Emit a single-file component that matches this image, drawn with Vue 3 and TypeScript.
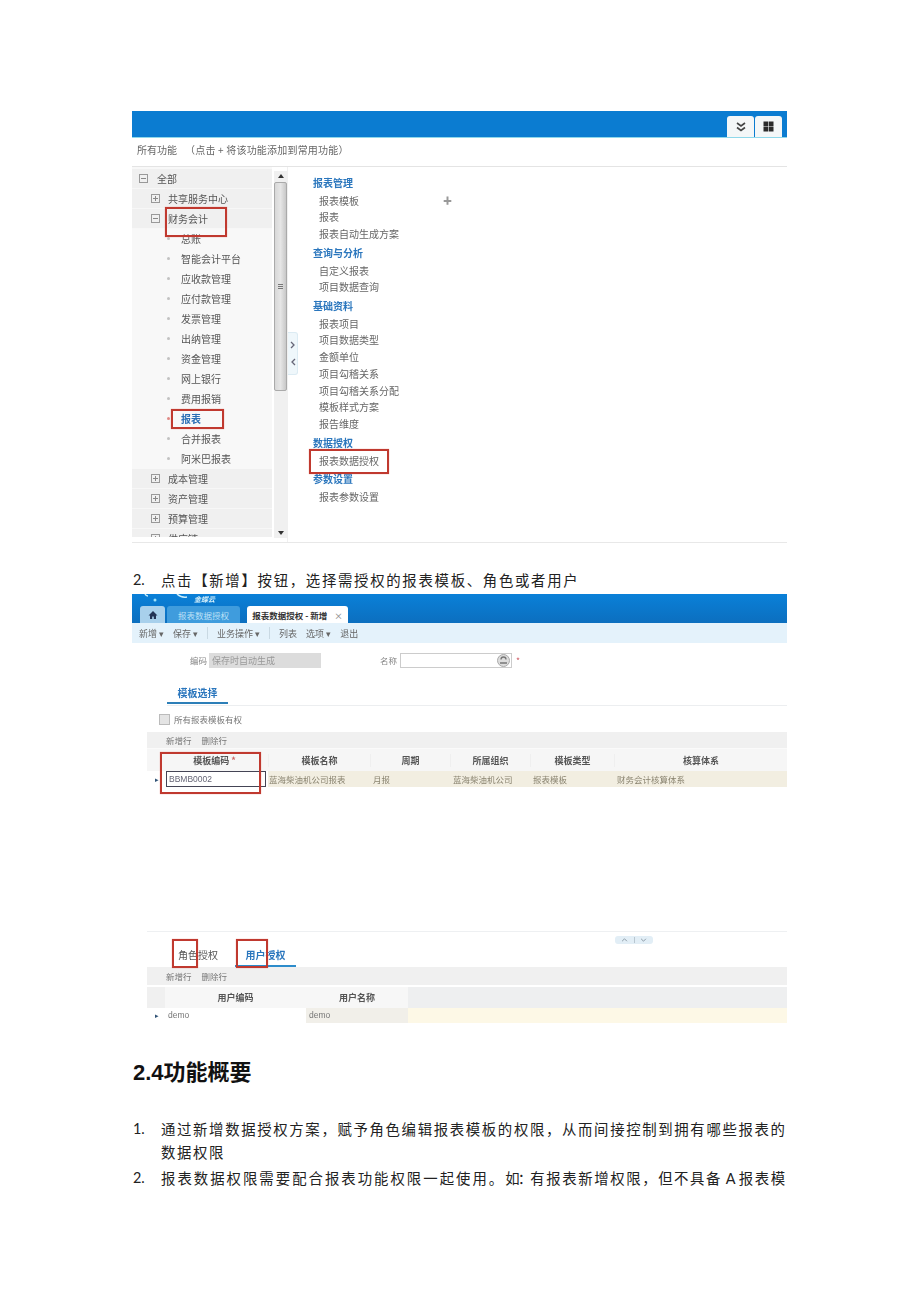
<script setup lang="ts">
type TreeRow = { label: string; kind: 'open' | 'closed' | 'leaf'; depth: number; active?: boolean }
type ReportRow = { label: string; head?: boolean }

const treeRows: TreeRow[] = [
  { label: '全部', kind: 'open', depth: 0 },
  { label: '共享服务中心', kind: 'closed', depth: 1 },
  { label: '财务会计', kind: 'open', depth: 1 },
  { label: '总账', kind: 'leaf', depth: 2 },
  { label: '智能会计平台', kind: 'leaf', depth: 2 },
  { label: '应收款管理', kind: 'leaf', depth: 2 },
  { label: '应付款管理', kind: 'leaf', depth: 2 },
  { label: '发票管理', kind: 'leaf', depth: 2 },
  { label: '出纳管理', kind: 'leaf', depth: 2 },
  { label: '资金管理', kind: 'leaf', depth: 2 },
  { label: '网上银行', kind: 'leaf', depth: 2 },
  { label: '费用报销', kind: 'leaf', depth: 2 },
  { label: '报表', kind: 'leaf', depth: 2, active: true },
  { label: '合并报表', kind: 'leaf', depth: 2 },
  { label: '阿米巴报表', kind: 'leaf', depth: 2 },
  { label: '成本管理', kind: 'closed', depth: 1 },
  { label: '资产管理', kind: 'closed', depth: 1 },
  { label: '预算管理', kind: 'closed', depth: 1 },
  { label: '供应链', kind: 'closed', depth: 1 },
]

const reportRows: ReportRow[] = [
  { label: '报表管理', head: true },
  { label: '报表模板' },
  { label: '报表' },
  { label: '报表自动生成方案' },
  { label: '查询与分析', head: true },
  { label: '自定义报表' },
  { label: '项目数据查询' },
  { label: '基础资料', head: true },
  { label: '报表项目' },
  { label: '项目数据类型' },
  { label: '金额单位' },
  { label: '项目勾稽关系' },
  { label: '项目勾稽关系分配' },
  { label: '模板样式方案' },
  { label: '报告维度' },
  { label: '数据授权', head: true },
  { label: '报表数据授权' },
  { label: '参数设置', head: true },
  { label: '报表参数设置' },
]

const templateHeads = ['模板名称', '周期', '所属组织', '模板类型', '核算体系']
const templateCells = ['蓝海柴油机公司报表', '月报', '蓝海柴油机公司', '报表模板', '财务会计核算体系']
</script>

<template>
  <main class="page">
    <section class="shot shot-one">
      <div class="top-bar">
        <div class="top-btns">
          <span class="top-btn">
            <svg width="12" height="12" viewBox="0 0 12 12"><path d="M2 2l4 3 4-3M2 6.500l4 3 4-3" fill="none" stroke="#444" stroke-width="1.600" /></svg>
          </span>
          <span class="top-btn">
            <svg width="11" height="11" viewBox="0 0 11 11"><path d="M.500 .500h4.700v4.700H.500zM5.800 .500h4.700v4.700H5.800zM.500 5.800h4.700v4.700H.500zM5.800 5.800h4.700v4.700H5.800z" fill="#2b2b2b" /></svg>
          </span>
        </div>
      </div>
      <div class="hint">所有功能<span class="hint-note">（点击 + 将该功能添加到常用功能）</span></div>
      <div class="func-body">
        <div class="tree">
          <div
            v-for="row in treeRows"
            :key="row.label"
            class="tree-row"
            :class="[`depth-${row.depth}`, { 'tree-leaf': row.kind === 'leaf', 'tree-active': row.active }]"
          >
            <svg v-if="row.kind !== 'leaf'" class="tree-box" width="9" height="9" viewBox="0 0 9 9">
              <rect x="0.500" y="0.500" width="8" height="8" fill="none" stroke="#999" />
              <path :d="row.kind === 'open' ? 'M2 4.500h5' : 'M2 4.500h5M4.500 2v5'" stroke="#888" />
            </svg>
            <i v-else class="tree-dot"></i>
            <span>{{ row.label }}</span>
          </div>
        </div>
        <div class="scrollbar">
          <span class="arrow-up"></span>
          <div class="thumb"><i></i></div>
          <span class="arrow-down"></span>
        </div>
        <div class="reports">
          <div class="collapse-handle">
            <svg width="6" height="8" viewBox="0 0 6 8"><path d="M1 1l3 3-3 3" fill="none" stroke="#667" stroke-width="1.300" /></svg>
            <svg width="6" height="8" viewBox="0 0 6 8"><path d="M5 1L2 4l3 3" fill="none" stroke="#667" stroke-width="1.300" /></svg>
          </div>
          <div
            v-for="row in reportRows"
            :key="row.label"
            :class="row.head ? 'report-head' : 'report-item'"
          >
            {{ row.label }}
            <span v-if="row.label === '报表模板'" class="report-plus">✚</span>
          </div>
        </div>
      </div>
      <i class="mark mark-finance"></i>
      <i class="mark mark-report"></i>
      <i class="mark mark-grant"></i>
    </section>

    <p class="step">
      <span class="num">2.</span>
      <span>点击【新增】按钮，选择需授权的报表模板、角色或者用户</span>
    </p>

    <section class="shot shot-two">
      <div class="app-head">
        <svg class="logo" width="60" height="10" viewBox="0 0 60 10">
          <path d="M13 0q1 2 3 2" fill="none" stroke="#cdeefa" stroke-width="1.500" />
          <circle cx="23" cy="6" r="1.500" fill="#9fe3fa" />
          <path d="M45 0q4 4 10 3" fill="none" stroke="#cdeefa" stroke-width="1.500" />
        </svg>
        <span class="brand">金蝶云</span>
        <div class="tabs">
          <span class="tab tab-home">
            <svg width="10" height="10" viewBox="0 0 10 10"><path d="M5 1L.500 5.500H2V9h2.200V6.500h1.600V9H8V5.500h1.500z" fill="#235" /></svg>
          </span>
          <span class="tab tab-old">报表数据授权</span>
          <span class="tab tab-new">报表数据授权 - 新增<em>×</em></span>
        </div>
      </div>
      <div class="toolbar">
        <span>新增 ▾</span>
        <span>保存 ▾</span>
        <i></i>
        <span>业务操作 ▾</span>
        <i></i>
        <span>列表</span>
        <span>选项 ▾</span>
        <span>退出</span>
      </div>
      <div class="form-row">
        <label class="form-label">编码</label>
        <div class="input-code">保存时自动生成</div>
        <label class="form-label name-label">名称</label>
        <div class="input-name">
          <svg width="13" height="13" viewBox="0 0 13 13">
            <circle cx="6.500" cy="6.500" r="6" fill="#ddd" stroke="#aaa" />
            <path d="M4 5.500a2.500 2.500 0 015 0M3 9h7" fill="none" stroke="#777" stroke-width="1.300" />
          </svg>
        </div>
        <span class="required">*</span>
      </div>
      <div class="section-tabs">
        <span class="section-tab">模板选择</span>
      </div>
      <div class="work-area">
        <label class="all-check"><i></i>所有报表模板有权</label>
        <div class="row-tools"><span>新增行</span><span>删除行</span></div>
        <div class="grid-row grid-head">
          <span></span>
          <span>模板编码 <em>*</em></span>
          <span v-for="head in templateHeads" :key="head">{{ head }}</span>
        </div>
        <div class="grid-row grid-body">
          <span class="row-arrow">▸</span>
          <span class="code-cell"><b>BBMB0002</b></span>
          <span v-for="cell in templateCells" :key="cell">{{ cell }}</span>
        </div>
        <div class="blank-area">
          <div class="split-btn">
            <svg width="7" height="4" viewBox="0 0 8 5"><path d="M1 4l3-3 3 3" fill="none" stroke="#8a9aa5" stroke-width="1.200" /></svg>
            <i></i>
            <svg width="7" height="4" viewBox="0 0 8 5"><path d="M1 1l3 3 3-3" fill="none" stroke="#8a9aa5" stroke-width="1.200" /></svg>
          </div>
        </div>
        <div class="auth-tabs">
          <span class="auth-tab">角色授权</span>
          <span class="auth-tab auth-on">用户授权</span>
        </div>
        <div class="row-tools lower-tools"><span>新增行</span><span>删除行</span></div>
        <div class="user-row user-head">
          <span></span><span>用户编码</span><span>用户名称</span><span></span>
        </div>
        <div class="user-row user-body">
          <span class="row-arrow">▸</span><span class="user-code">demo</span><span class="user-name">demo</span><span class="user-fill"></span>
        </div>
      </div>
      <i class="mark mark-code"></i>
      <i class="mark mark-role"></i>
      <i class="mark mark-user"></i>
    </section>

    <h2 class="title"><span>2.4</span>功能概要</h2>

    <ol class="notes">
      <li>
        <span class="num">1.</span>
        <p>通过新增数据授权方案，赋予角色编辑报表模板的权限，从而间接控制到拥有哪些报表的数据权限</p>
      </li>
      <li>
        <span class="num">2.</span>
        <p class="cut"><span class="wide">报表数据权限需要配合报表功能权限一起使用。</span><span class="tight">如：</span><span class="even">有报表新增权限，但不具备</span><span class="latin"> A </span><span class="even">报表模</span></p>
      </li>
    </ol>
  </main>
</template>

<style scoped>
.page {
  width: 920px;
  height: 1302px;
  box-sizing: border-box;
  padding: 111px 133px 0 132px;
  overflow: hidden;
  background: #fff;
  font-family: "Noto Sans CJK SC", "Noto Sans", sans-serif;
  color: #222;
}

.shot {
  position: relative;
  filter: blur(0.4px);
}

.mark {
  position: absolute;
  box-sizing: border-box;
  border: 2px solid #c0392f;
  box-shadow: 0 0 1px rgba(230, 80, 70, 0.6);
}

/* first screenshot */
.shot-one {
  height: 432px;
  border-bottom: 1px solid #e8e8e8;
  box-sizing: border-box;
}

.top-bar {
  height: 26px;
  display: flex;
  justify-content: flex-end;
  align-items: flex-end;
  padding-right: 5px;
  background: #0b7cd1;
  border-bottom: 1px solid #8fd8ea;
}

.top-btns {
  display: flex;
  gap: 1px;
}

.top-btn {
  width: 27px;
  height: 21px;
  display: flex;
  align-items: center;
  justify-content: center;
  background: #f4f7f8;
  border-radius: 3px 3px 0 0;
}

.hint {
  height: 28px;
  padding-left: 5px;
  line-height: 24px;
  font-size: 10px;
  color: #666;
  border-bottom: 1px solid #e4e4e4;
}

.hint-note {
  margin-left: 8px;
  letter-spacing: 0.2px;
}

.func-body {
  height: 375px;
  display: flex;
  overflow: hidden;
}

.tree {
  width: 140px;
  flex: none;
  padding-top: 2px;
  box-sizing: border-box;
  height: 370px;
  overflow: hidden;
  background: #f8f8f8;
}

.tree-row {
  height: 20px;
  display: flex;
  align-items: center;
  font-size: 10px;
  color: #555;
  background: #f0f0f0;
  border-bottom: 1px solid #f7f7f7;
  box-sizing: border-box;
}

.tree-leaf {
  background: #f8f8f8;
  border-bottom: none;
  padding-bottom: 1px;
}

.tree-box {
  flex: none;
  margin-right: 8px;
}

.depth-0 {
  padding-left: 7px;
}

.depth-0 .tree-box {
  margin-right: 9px;
}

.depth-1 {
  padding-left: 19px;
}

.depth-2 {
  padding-left: 35px;
}

.tree-dot {
  width: 3px;
  height: 3px;
  margin-right: 11px;
  border-radius: 50%;
  background: #c2c2c2;
}

.tree-active .tree-dot {
  background: #e08a86;
}

.tree-active span {
  color: #2a6fb5;
  font-weight: 700;
}

.scrollbar {
  width: 13px;
  flex: none;
  margin: 4px 0 4px 2px;
  display: flex;
  flex-direction: column;
  align-items: center;
  background: #f0f0f0;
}

.arrow-up,
.arrow-down {
  width: 0;
  height: 0;
  flex: none;
  margin: 3px 0;
  border-left: 3px solid transparent;
  border-right: 3px solid transparent;
}

.arrow-up {
  border-bottom: 4px solid #333;
}

.arrow-down {
  margin-top: auto;
  border-top: 4px solid #333;
}

.thumb {
  width: 13px;
  height: 209px;
  margin-top: 1px;
  display: flex;
  align-items: center;
  justify-content: center;
  box-sizing: border-box;
  border: 1px solid #aaa;
  border-radius: 2px;
  background: linear-gradient(90deg, #d8d8d8, #e6e6e6 50%, #c8c8c8);
}

.thumb i {
  width: 5px;
  height: 6px;
  background: repeating-linear-gradient(180deg, #777 0 1px, transparent 1px 2px);
}

.reports {
  position: relative;
  flex: 1;
  padding: 6px 0 0 25px;
  border-left: 1px solid #f0f0f0;
  font-size: 10px;
}

.collapse-handle {
  position: absolute;
  top: 165px;
  left: 0;
  width: 10px;
  height: 43px;
  box-sizing: border-box;
  display: flex;
  flex-direction: column;
  align-items: center;
  justify-content: space-evenly;
  background: #eff7fb;
  border: 1px solid #dcebf3;
  border-left: none;
  border-radius: 0 3px 3px 0;
}

.report-head {
  height: 19.650px;
  line-height: 19.650px;
  color: #2a76bd;
  font-weight: 700;
}

.report-item {
  position: relative;
  height: 16.750px;
  line-height: 16.750px;
  padding-left: 6px;
  color: #666;
}

.report-plus {
  position: absolute;
  left: 130px;
  top: 0;
  font-size: 9px;
  color: #999;
}

.mark-finance {
  left: 33px;
  top: 96px;
  width: 62px;
  height: 30px;
}

.mark-report {
  left: 39px;
  top: 298px;
  width: 53px;
  height: 20px;
}

.mark-grant {
  left: 177px;
  top: 338px;
  width: 80px;
  height: 25px;
}

/* step line */
.step {
  height: 22px;
  margin: 26px 0 3px;
  display: flex;
  font-size: 14.400px;
  line-height: 22px;
  letter-spacing: 1.700px;
  color: #222;
}

.num {
  width: 29px;
  flex: none;
  padding-left: 1px;
  box-sizing: border-box;
  font-family: Lato, "Noto Sans", sans-serif;
  letter-spacing: 0;
}

/* second screenshot */
.shot-two {
  height: 428px;
  font-size: 9px;
  color: #666;
}

.app-head {
  position: relative;
  height: 29px;
  display: flex;
  align-items: flex-end;
  background: linear-gradient(180deg, #0a80d8, #0c6fbf);
}

.logo {
  position: absolute;
  left: 0;
  top: 0;
}

.brand {
  position: absolute;
  left: 62px;
  top: 0;
  font-size: 7px;
  line-height: 10px;
  font-style: italic;
  font-weight: 700;
  color: #d6f0fb;
}

.tabs {
  display: flex;
  gap: 2px;
  padding-left: 8px;
}

.tab {
  height: 17px;
  display: flex;
  align-items: center;
  justify-content: center;
  border-radius: 3px 3px 0 0;
  font-size: 8.500px;
}

.tab-home {
  width: 25px;
  background: #a8d0ec;
}

.tab-old {
  width: 73px;
  background: #3f9cdd;
  color: #bde0f6;
}

.tab-new {
  width: 101px;
  margin-left: 5px;
  background: #fff;
  color: #333;
  font-weight: 700;
}

.tab-new em {
  margin-left: 7px;
  font-style: normal;
  font-weight: 400;
  color: #888;
}

.toolbar {
  height: 20px;
  display: flex;
  align-items: center;
  gap: 9px;
  padding-left: 7px;
  background: #e4f2fb;
  color: #666;
}

.toolbar i {
  width: 1px;
  height: 12px;
  background: #c9d9e3;
}

.form-row {
  height: 37px;
  display: flex;
  align-items: center;
  padding-left: 58px;
  padding-bottom: 3px;
  box-sizing: border-box;
  font-size: 8.500px;
}

.form-label {
  width: 19px;
  flex: none;
  color: #888;
}

.input-code {
  width: 112px;
  height: 15px;
  padding-left: 3px;
  box-sizing: border-box;
  line-height: 15px;
  background: #dcdcdc;
  color: #999;
  font-size: 9px;
}

.name-label {
  margin-left: 59px;
  width: 20px;
}

.input-name {
  width: 112px;
  height: 15px;
  display: flex;
  align-items: center;
  justify-content: flex-end;
  padding-right: 1px;
  box-sizing: border-box;
  background: #fff;
  border: 1px solid #ccc;
}

.required {
  margin-left: 4px;
  color: #d0606a;
}

.section-tabs {
  height: 25px;
  margin-left: 35px;
  border-bottom: 1px solid #eceef0;
  position: relative;
}

.section-tab {
  position: absolute;
  left: 0;
  bottom: 1px;
  width: 61px;
  height: 22px;
  box-sizing: border-box;
  text-align: center;
  line-height: 21px;
  font-size: 10px;
  font-weight: 700;
  color: #2a76bd;
  border-bottom: 2px solid #2d7fb8;
}

.work-area {
  margin-left: 15px;
}

.all-check {
  height: 26px;
  display: flex;
  align-items: center;
  padding-left: 12px;
  font-size: 8.500px;
  color: #777;
}

.all-check i {
  width: 9px;
  height: 9px;
  margin-right: 4px;
  background: #e4e4e4;
  border: 1px solid #bbb;
}

.row-tools {
  height: 16px;
  display: flex;
  align-items: center;
  gap: 10px;
  padding-left: 19px;
  background: #f0f0f0;
  font-size: 8.500px;
  color: #777;
}

.grid-row {
  display: grid;
  grid-template-columns: 13px 108px 102px 80px 80px 84px 1fr;
  align-items: center;
}

.grid-head {
  height: 22px;
  text-align: center;
  background: #f6f6f6;
  font-weight: 700;
  color: #555;
  border-top: 1px solid #fafafa;
}

.grid-head em {
  font-style: normal;
  color: #c66;
}

.grid-head span + span {
  border-left: 1px solid #efefef;
}

.grid-body {
  height: 16px;
  background: linear-gradient(90deg, #fff 13px, #f2eee1 13px);
  font-size: 8.500px;
  color: #8a8470;
}

.grid-body span + span + span {
  padding-left: 3px;
}

.grid-body span:nth-child(3) {
  padding-left: 1px;
}

.row-arrow {
  padding-left: 8px;
  font-size: 7px;
  color: #357;
}

.code-cell {
  height: 16px;
  background: #fff;
}

.code-cell b {
  display: block;
  width: 100px;
  height: 16px;
  margin-left: 6px;
  padding-left: 2px;
  box-sizing: border-box;
  border: 1px solid #445;
  font: 400 8.500px/14px "Liberation Sans", sans-serif;
  color: #667;
}

.blank-area {
  position: relative;
  height: 145px;
  border-bottom: 1px solid #eef0f2;
  box-sizing: border-box;
}

.split-btn {
  position: absolute;
  right: 134px;
  bottom: -13px;
  width: 38px;
  height: 8px;
  display: flex;
  align-items: center;
  justify-content: space-evenly;
  background: #e2eef6;
  border-radius: 3px;
}

.split-btn i {
  width: 1px;
  height: 6px;
  background: #b8c6d0;
}

.auth-tabs {
  height: 35px;
  display: flex;
  align-items: flex-end;
  padding-left: 31px;
}

.auth-tab {
  height: 22px;
  margin-right: 16px;
  font-size: 10px;
  line-height: 20px;
  color: #555;
}

.auth-on {
  width: 61px;
  margin-left: 1px;
  text-align: center;
  color: #2a76bd;
  font-weight: 700;
  box-sizing: border-box;
  border-bottom: 2px solid #2d8ccb;
}

.lower-tools {
  height: 18px;
}

.user-row {
  display: grid;
  grid-template-columns: 18px 141px 102px 1fr;
  align-items: center;
}

.user-head {
  height: 21px;
  margin-top: 2px;
  text-align: center;
  font-weight: 700;
  color: #555;
  background: #f7f7f7;
}

.user-head span:first-child {
  height: 100%;
  background: #f0f0f0;
}

.user-head span:last-child {
  height: 100%;
  background: #eeeff0;
}

.user-body {
  height: 15px;
  font: 400 8.500px/15px "Liberation Sans", sans-serif;
  color: #777;
}

.user-body > span {
  height: 100%;
}

.user-body > .row-arrow {
  line-height: 15px;
}

.user-code {
  padding-left: 3px;
}

.user-name {
  padding-left: 3px;
  background: #f1efe9;
}

.user-fill {
  background: #fdf8e6;
}

.mark-code {
  left: 28px;
  top: 158px;
  width: 101px;
  height: 42px;
}

.mark-role {
  left: 40px;
  top: 345px;
  width: 26px;
  height: 29px;
}

.mark-user {
  left: 104px;
  top: 345px;
  width: 32px;
  height: 29px;
}

/* bottom text */
.title {
  margin: 33px 0 0 1px;
  height: 30px;
  font-size: 22px;
  line-height: 30px;
  font-weight: 700;
  color: #111;
}

.title span {
  font-family: "Liberation Sans", sans-serif;
  font-size: 22px;
}

.notes {
  margin: 32px 0 0;
  padding: 0;
  list-style: none;
  font-size: 14.400px;
  line-height: 23px;
  letter-spacing: 1.650px;
  color: #222;
}

.notes li {
  display: flex;
  margin-bottom: 3px;
}

.notes p {
  margin: 0;
  width: 630px;
  flex: none;
}

.notes .cut {
  white-space: pre;
  overflow: hidden;
}

.wide {
  letter-spacing: 2px;
}

.tight {
  letter-spacing: -1.900px;
}

.even {
  letter-spacing: 1.600px;
}

.latin {
  font-family: Lato, "Noto Sans", sans-serif;
  letter-spacing: 0;
}
</style>
